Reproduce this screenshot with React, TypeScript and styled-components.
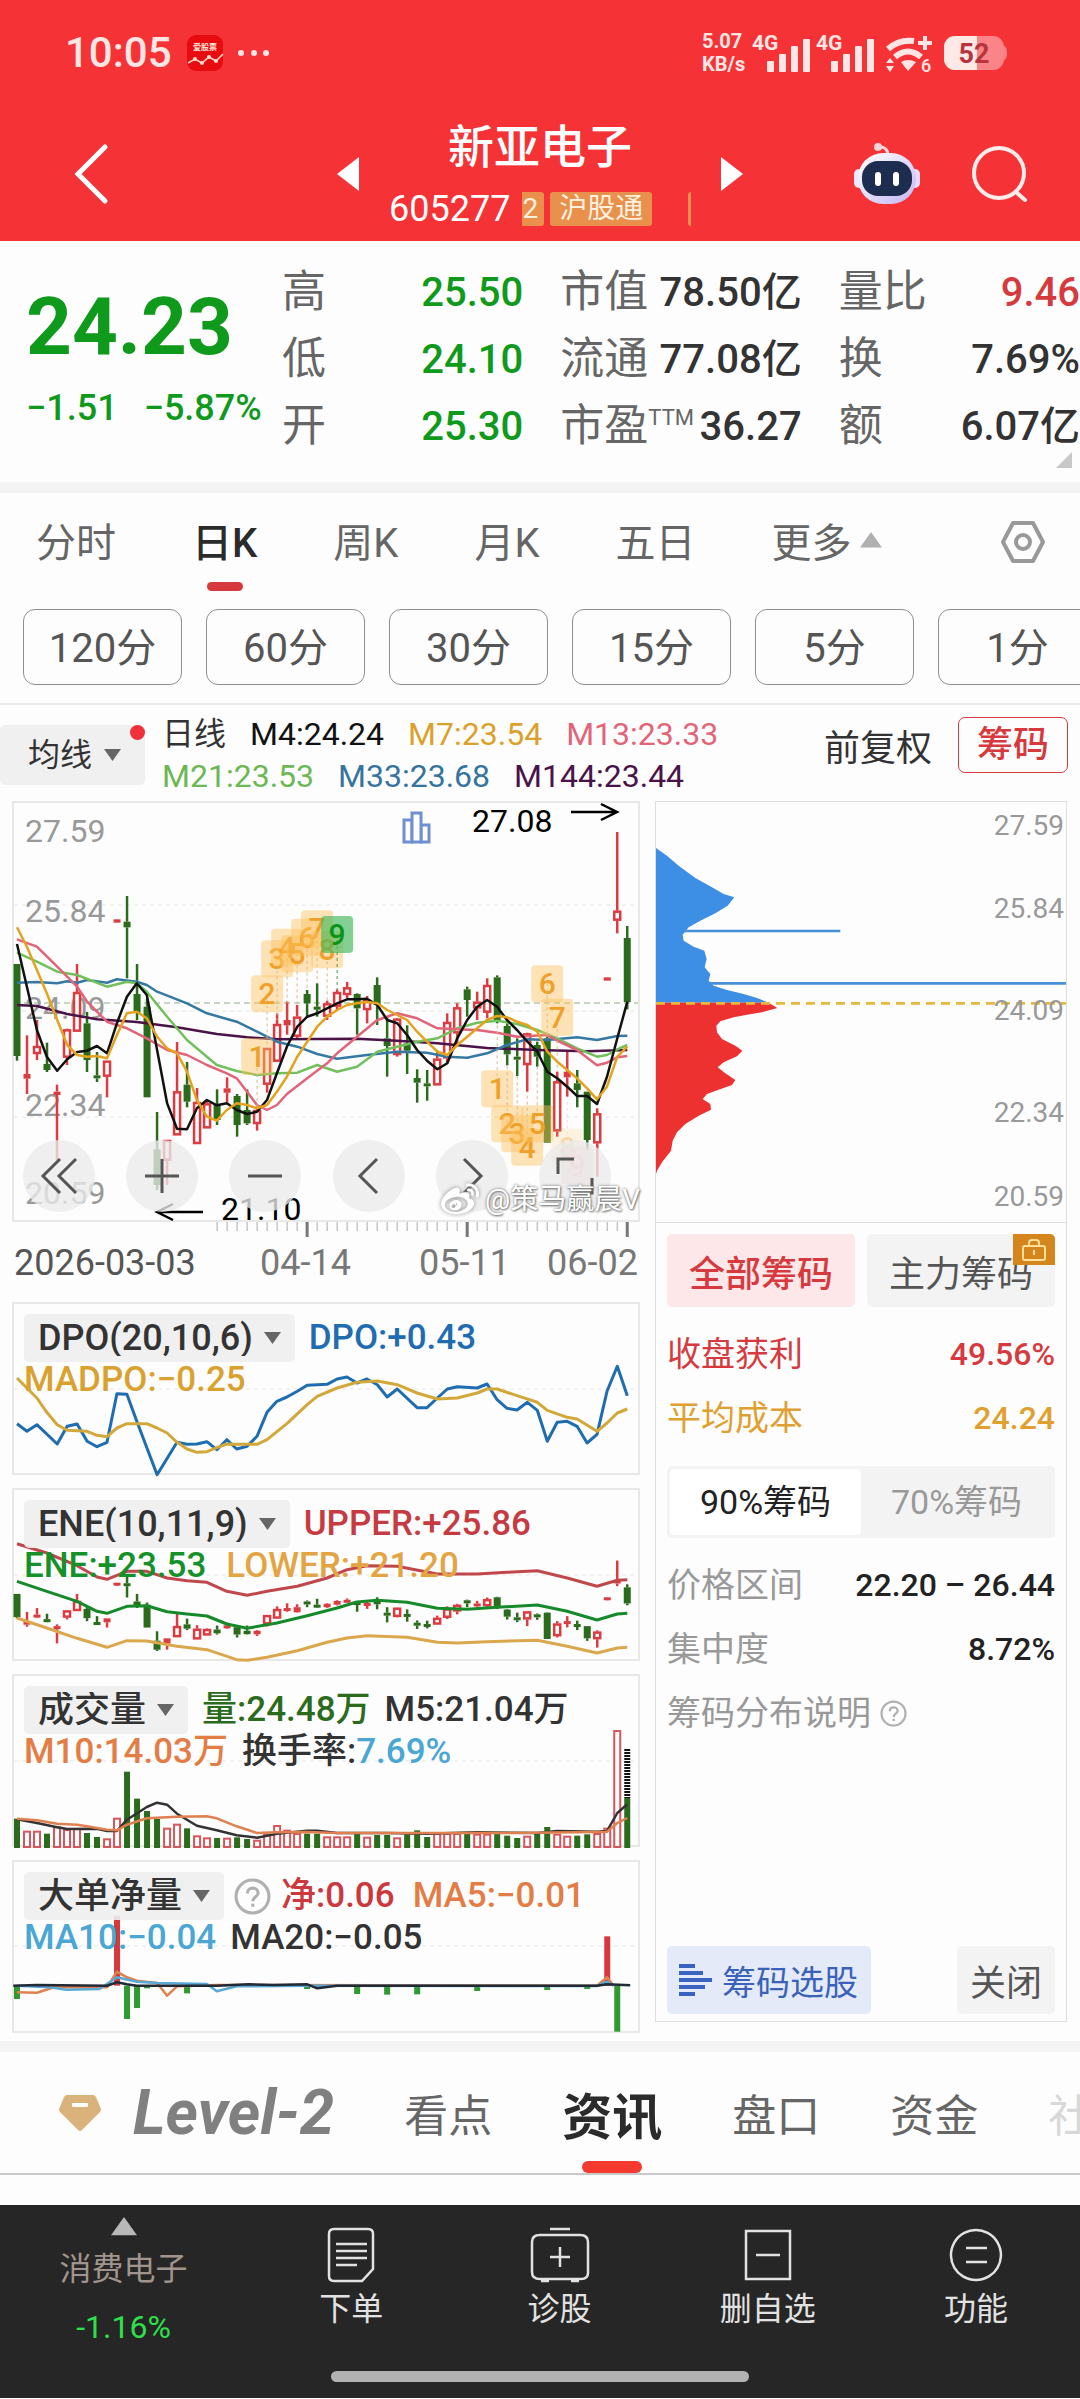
import React from "react";
import styled, { createGlobalStyle, css } from "styled-components";
import { FaWeibo } from "react-icons/fa";

const GlobalStyle = createGlobalStyle`
  *, *::before, *::after { box-sizing: border-box; }
  body {
    margin: 0;
    background: #fdfdfd;
    color: #333;
    font-family: Roboto, "Noto Sans CJK SC", sans-serif;
    overflow-x: hidden;
  }
  button, select {
    margin: 0;
    padding: 0;
    border: 0;
    background: transparent;
    color: inherit;
    font: inherit;
    cursor: pointer;
  }
  svg { display: block; overflow: visible; }
  dl, dt, dd, h1 { margin: 0; font-weight: inherit; }
`;

const RED = "#d63a3f";
const GREEN = "#0f9a1c";
const UP = "#dc3c41";
const DOWN = "#2b6b1c";

/* ---------- header ---------- */

const Header = styled.header`
  background: #f53337;
  color: #fff;
`;

const StatusBar = styled.div`
  display: flex;
  align-items: center;
  justify-content: space-between;
  height: 106px;
  padding: 0 73px 0 65px;
  color: #ffe6e4;
`;

const StatusGroup = styled.div<{ $gap: number }>`
  display: flex;
  align-items: center;
  gap: ${(p) => p.$gap}px;
`;

const Clock = styled.span`
  font-size: 42px;
  line-height: 50px;
  font-weight: 500;
`;

const NetSpeed = styled.span`
  width: 44px;
  font-size: 20px;
  line-height: 23px;
  font-weight: 700;
  white-space: nowrap;
`;

const TitleBar = styled.div`
  display: grid;
  grid-template-columns: 1fr auto 1fr;
  align-items: center;
  height: 135px;
  padding: 0 52px 0 74px;
`;

const HeaderButton = styled.button`
  display: block;
  justify-self: start;
`;

const HeaderActions = styled.div`
  display: flex;
  align-items: center;
  justify-self: end;
  gap: 52px;
`;

const StockSwitch = styled.div`
  display: flex;
  align-items: center;
  gap: 30px;
  padding-right: 22px;
`;

const StockName = styled.div`
  width: 302px;
  padding-top: 8px;
`;

const StockTitle = styled.h1`
  font-size: 46px;
  line-height: 62px;
  font-weight: 500;
  text-align: center;
`;

const CodeRow = styled.div`
  display: flex;
  align-items: center;
  gap: 12px;
  font-size: 36px;
  line-height: 62px;
`;

const Ticker = styled.div`
  display: flex;
  flex: 1;
  gap: 6px;
  overflow: hidden;
  justify-content: flex-start;
`;

const Tag = styled.span<{ $cut?: boolean }>`
  flex: none;
  padding: ${(p) => (p.$cut ? "0 6px 0 0" : "0 9px")};
  border-radius: ${(p) => (p.$cut ? "0 3px 3px 0" : "3px")};
  background: #e8904c;
  color: #fff0df;
  font-size: 28px;
  line-height: 34px;
`;

const NextTag = styled(Tag)`
  margin-left: 30px;
`;

/* ---------- quote ---------- */

const Quote = styled.section`
  position: relative;
  display: grid;
  grid-template-columns: 256px 1fr;
  padding: 18px 0 22px 26px;
`;

const PriceBlock = styled.div`
  padding-top: 18px;
  color: ${GREEN};
`;

const Price = styled.div`
  font-size: 80px;
  line-height: 100px;
  font-weight: 700;
`;

const Change = styled.div`
  display: flex;
  gap: 26px;
  font-size: 36px;
  line-height: 62px;
  font-weight: 500;
  white-space: nowrap;
`;

const QuoteGrid = styled.dl`
  display: grid;
  grid-template-columns: repeat(3, 1fr);
  column-gap: 37px;
`;

const QuoteCell = styled.div`
  display: flex;
  align-items: center;
  justify-content: space-between;
  height: 67px;
  white-space: nowrap;
`;

const QuoteLabel = styled.dt`
  color: #666;
  font-size: 44px;
  line-height: 67px;
`;

const QuoteValue = styled.dd<{ $color?: string }>`
  color: ${(p) => p.$color ?? "#333"};
  font-size: 40px;
  line-height: 67px;
  font-weight: 500;
`;

const Sup = styled.sup`
  font-size: 22px;
  line-height: 22px;
`;

const Corner = styled.i`
  position: absolute;
  right: 8px;
  bottom: 14px;
  border: 8px solid transparent;
  border-right-color: #c8c8c8;
  border-bottom-color: #c8c8c8;
`;

const Band = styled.div`
  height: 11px;
  background: #f4f4f4;
`;

/* ---------- period tabs ---------- */

const PeriodTabs = styled.nav`
  display: flex;
  align-items: stretch;
  gap: 76px;
  height: 98px;
  padding: 0 34px 0 36px;
`;

const PeriodTab = styled.button<{ $active?: boolean }>`
  position: relative;
  display: flex;
  align-items: center;
  gap: 8px;
  padding-bottom: 4px;
  color: ${(p) => (p.$active ? "#2b2b2b" : "#666")};
  font-size: 40px;
  font-weight: ${(p) => (p.$active ? 500 : 400)};
  white-space: nowrap;
  ${(p) =>
    p.$active &&
    css`
      &::after {
        content: "";
        position: absolute;
        bottom: 0;
        left: 50%;
        width: 36px;
        height: 9px;
        margin-left: -18px;
        border-radius: 5px;
        background: ${RED};
      }
    `}
`;

const SettingsButton = styled.button`
  margin-left: auto;
`;

const Intervals = styled.div`
  display: flex;
  gap: 24px;
  padding: 18px 0 18px 23px;
  border-bottom: 2px solid #e9e9e9;
  overflow: hidden;
`;

const Interval = styled.button`
  flex: 0 0 159px;
  height: 76px;
  padding-bottom: 4px;
  border: 1px solid #8e8e93;
  border-radius: 12px;
  color: #555;
  font-size: 40px;
`;

/* ---------- moving average legend ---------- */

const Legend = styled.div`
  display: flex;
  align-items: flex-start;
  height: 96px;
  padding: 8px 12px 0 0;
`;

const PickerBox = styled.label<{ $wide?: boolean }>`
  position: relative;
  display: flex;
  flex: none;
  align-items: center;
  gap: ${(p) => (p.$wide ? 12 : 11)}px;
  height: ${(p) => (p.$wide ? 60 : 48)}px;
  margin-top: ${(p) => (p.$wide ? 12 : 0)}px;
  padding: ${(p) => (p.$wide ? "0 24px 0 28px" : "0 14px")};
  border-radius: 5px;
  background: rgba(238, 238, 238, 0.9);
  color: #333;
  font-size: ${(p) => (p.$wide ? 32 : 36)}px;
`;

const Choice = styled.select`
  appearance: none;
  field-sizing: content;
  outline: 0;
`;

const Dot = styled.i`
  position: absolute;
  top: 0;
  right: 0;
  width: 15px;
  height: 15px;
  border-radius: 50%;
  background: #f0303a;
`;

const MaList = styled.div`
  display: flex;
  flex: 1;
  flex-direction: column;
  padding-left: 17px;
`;

const MaRow = styled.div`
  display: flex;
  gap: 24px;
  font-size: 32px;
  line-height: 42px;
  white-space: nowrap;
`;

const Ink = styled.span<{ $color: string }>`
  color: ${(p) => p.$color};
`;

const AdjustButton = styled.button`
  margin: 15px 26px 0 0;
  font-size: 36px;
  line-height: 42px;
`;

const ChipsButton = styled.button`
  width: 110px;
  height: 56px;
  margin-top: 4px;
  border: 1px solid ${RED};
  border-radius: 7px;
  color: ${RED};
  font-size: 36px;
  line-height: 50px;
  font-weight: 500;
`;

/* ---------- charts ---------- */

const Board = styled.main`
  display: grid;
  grid-template-columns: 628fr 412fr;
  gap: 15px;
  padding: 0 13px 8px 12px;
`;

const Panels = styled.div`
  display: flex;
  flex-direction: column;
  gap: 13px;
`;

const Stack = styled.section`
  display: grid;
  > * {
    grid-area: 1 / 1;
  }
`;

const Plot = styled.svg`
  width: 100%;
  height: auto;
  font-family: Roboto, sans-serif;
`;

const ChartControls = styled.div`
  display: flex;
  align-self: end;
  justify-content: space-between;
  padding: 0 29px 26px 11px;
`;

const RoundButton = styled.button`
  display: grid;
  place-items: center;
  width: 72px;
  height: 72px;
  border-radius: 50%;
  background: rgba(234, 234, 234, 0.78);
`;

const Watermark = styled.div`
  display: flex;
  align-items: center;
  align-self: end;
  justify-self: end;
  gap: 6px;
  padding-bottom: 15px;
  color: #fff;
  font-size: 28px;
  line-height: 46px;
  text-shadow: 0 0 3px #666, 1px 1px 2px #888;
  pointer-events: none;
  svg {
    filter: drop-shadow(0 0 2px #888);
  }
`;

const ChartColumn = styled.div`
  display: flex;
  flex-direction: column;
`;

const Dates = styled.div`
  display: grid;
  grid-template-columns: 246px 159px 1fr auto;
  padding: 4px 2px 5px;
  color: #777;
  font-size: 36px;
  line-height: 42px;
`;

const FirstDate = styled.span`
  color: #555;
`;

const PanelText = styled.div`
  padding: 12px 12px 0;
  font-size: 35px;
  line-height: 36px;
  font-weight: 500;
  white-space: nowrap;
`;

const PanelLine = styled.div<{ $gap?: number }>`
  display: flex;
  align-items: center;
  gap: ${(p) => p.$gap ?? 14}px;
`;

/* ---------- chip distribution ---------- */

const ChipPanel = styled.aside`
  display: flex;
  flex-direction: column;
  margin-bottom: 11px;
  border: 1px solid #dedede;
`;

const ChipBody = styled.div`
  display: flex;
  flex: 1;
  flex-direction: column;
  padding: 11px 11px 7px;
  border-top: 1px solid #dedede;
`;

const ChipTabs = styled.div`
  display: grid;
  grid-template-columns: 1fr 1fr;
  gap: 12px;
  margin-bottom: 15px;
`;

const ChipTab = styled.button<{ $active?: boolean }>`
  position: relative;
  height: 73px;
  border-radius: 5px;
  background: ${(p) => (p.$active ? "#fde7e8" : "#f3f3f4")};
  color: ${(p) => (p.$active ? RED : "#555")};
  font-size: 36px;
  font-weight: ${(p) => (p.$active ? 500 : 400)};
`;

const Lock = styled.span`
  position: absolute;
  top: 0;
  right: 0;
  display: grid;
  place-items: center;
  width: 42px;
  height: 31px;
  border-radius: 0 5px 0 0;
  background: #d4861c;
`;

const ChipRow = styled.div<{ $color?: string }>`
  display: flex;
  align-items: center;
  justify-content: space-between;
  color: ${(p) => p.$color ?? "#999"};
  font-size: 34px;
  line-height: 64px;
  white-space: nowrap;
`;

const ChipValue = styled.span<{ $color: string }>`
  color: ${(p) => p.$color};
  font-size: 32px;
  font-weight: 500;
`;

const Segments = styled.div`
  display: grid;
  grid-template-columns: 1fr 1fr;
  height: 72px;
  margin: 16px 0 15px;
  padding: 3px;
  border-radius: 5px;
  background: #f3f3f3;
`;

const Segment = styled.button<{ $active?: boolean }>`
  padding-bottom: 6px;
  border-radius: 4px;
  background: ${(p) => (p.$active ? "#fff" : "transparent")};
  color: ${(p) => (p.$active ? "#222" : "#999")};
  font-size: 34px;
`;

const HelpLink = styled.button`
  display: flex;
  align-items: center;
  gap: 9px;
  color: #999;
  font-size: 34px;
  line-height: 64px;
`;

const ChipFooter = styled.div`
  display: flex;
  justify-content: space-between;
  margin-top: auto;
`;

const PickStocks = styled.button`
  display: flex;
  align-items: center;
  gap: 10px;
  height: 68px;
  padding: 0 13px 0 12px;
  border-radius: 5px;
  background: #e5eaf8;
  color: #3a62b8;
  font-size: 34px;
`;

const CloseButton = styled.button`
  width: 98px;
  height: 68px;
  border-radius: 5px;
  background: #f3f3f3;
  color: #555;
  font-size: 36px;
`;

/* ---------- bottom ---------- */

const InfoTabs = styled.nav`
  display: flex;
  gap: 70px;
  height: 123px;
  padding-left: 59px;
  border-bottom: 2px solid #c9c9c9;
  overflow: hidden;
`;

const InfoTab = styled.button<{ $active?: boolean; $faded?: boolean }>`
  position: relative;
  display: flex;
  flex: none;
  align-items: center;
  gap: 32px;
  color: ${(p) => (p.$active ? "#2b2b2b" : p.$faded ? "#d8d8d8" : "#666")};
  font-size: ${(p) => (p.$active ? 50 : 44)}px;
  font-weight: ${(p) => (p.$active ? 700 : 400)};
  ${(p) =>
    p.$active &&
    css`
      &::after {
        content: "";
        position: absolute;
        bottom: 0;
        left: 50%;
        width: 60px;
        height: 12px;
        margin-left: -30px;
        border-radius: 6px;
        background: #f43a30;
      }
    `}
`;

const LevelText = styled.span`
  color: #808080;
  font-size: 62px;
  line-height: 66px;
  font-style: italic;
  font-weight: 700;
`;

const ContentPeek = styled.div`
  height: 30px;
`;

const Dock = styled.footer`
  padding-bottom: 16px;
  background: #262626;
  color: #e2e2e2;
`;

const DockItems = styled.nav`
  display: grid;
  grid-template-columns: 247fr 208fr 208fr 208fr 208fr;
  height: 166px;
`;

const DockItem = styled.button`
  display: flex;
  flex-direction: column;
  align-items: center;
  gap: 4px;
  padding-top: 22px;
  font-size: 32px;
  line-height: 44px;
`;

const Sector = styled(DockItem)`
  gap: 0;
  padding-top: 12px;
  color: #a0958e;
  line-height: 58px;
`;

const SectorName = styled.span`
  margin-top: 5px;
`;

const HomeBar = styled.div`
  width: 418px;
  height: 11px;
  margin: 0 auto;
  border-radius: 6px;
  background: #b2b2b2;
`;

/* ---------- chart data ---------- */

/* Plot units: 24.13 per session across, 3 per pixel down. */
const STEP = 24.13;
const px = (x: number) => x / 2.412 - 12;
const sx = (i: number) => px(41 + STEP * i);

const trace = (points: string, top: number) =>
  points
    .split(" ")
    .map((p) => {
      const [x, y] = p.split(",").map(Number);
      return `${px(x).toFixed(1)},${((y - top) / 3).toFixed(1)}`;
    })
    .join(" ");

/* rising, high, body top, body bottom, low, volume top */
type Candle = [0 | 1, number, number, number, number, number];

const candles: Candle[] = [
  [0, 522, 522, 798, 812, 447], [1, 736, 852, 866, 912, 483], [1, 690, 768, 792, 810, 483],
  [0, 758, 822, 840, 846, 492], [1, 884, 905, 915, 1110, 470], [1, 716, 718, 803, 825, 478],
  [1, 522, 606, 725, 725, 475], [0, 666, 700, 810, 846, 490], [0, 786, 856, 864, 876, 502],
  [1, 812, 812, 860, 922, 506], [1, 388, 388, 398, 398, 444], [0, 318, 395, 412, 565, 306],
  [0, 522, 612, 668, 690, 387], [0, 625, 650, 922, 922, 424], [0, 966, 1078, 1185, 1200, 448],
  [1, 1050, 1050, 1112, 1185, 474], [1, 756, 904, 1036, 1036, 462], [0, 816, 884, 935, 952, 476],
  [1, 894, 936, 1062, 1062, 497], [1, 932, 940, 1015, 1015, 503], [0, 898, 945, 990, 1005, 505],
  [1, 862, 895, 908, 938, 504], [0, 912, 918, 1005, 1040, 503], [0, 898, 960, 1000, 1005, 508],
  [1, 950, 960, 1002, 1022, 510], [1, 774, 774, 884, 908, 492], [1, 670, 702, 815, 815, 466],
  [1, 634, 690, 706, 734, 480], [1, 645, 680, 740, 745, 490], [0, 600, 612, 640, 680, 492],
  [0, 580, 650, 656, 680, 492], [1, 632, 640, 680, 690, 500], [1, 598, 606, 650, 660, 500],
  [1, 576, 592, 615, 625, 500], [0, 610, 612, 655, 734, 492], [1, 618, 630, 660, 700, 501],
  [0, 562, 585, 645, 705, 496], [0, 680, 745, 768, 860, 496], [1, 684, 686, 795, 800, 503],
  [0, 706, 760, 782, 852, 494], [0, 838, 864, 878, 938, 482], [0, 840, 880, 888, 932, 502],
  [1, 780, 806, 886, 886, 490], [1, 670, 696, 805, 820, 490], [1, 640, 652, 730, 765, 490],
  [0, 590, 598, 630, 680, 492], [1, 605, 635, 655, 690, 492], [1, 565, 585, 668, 685, 492],
  [0, 556, 562, 690, 700, 492], [0, 700, 708, 793, 826, 498], [0, 745, 800, 808, 858, 505],
  [1, 728, 730, 825, 905, 498], [0, 755, 765, 800, 830, 490], [0, 740, 745, 1058, 1058, 472],
  [1, 845, 874, 1024, 1040, 492], [1, 786, 845, 862, 920, 498], [0, 840, 880, 900, 952, 498],
  [0, 905, 905, 1050, 1080, 494], [1, 955, 970, 1060, 1160, 490], [1, 562, 562, 572, 572, 474],
  [1, 126, 362, 392, 430, 181], [0, 408, 444, 636, 658, 385],
];

const averages: [string, string][] = [
  ["#4b1248", "41,645 89,648 162,672 234,688 330,696 427,712 523,732 596,742 668,748 861,746 958,752 1055,760 1175,774 1296,780 1416,784 1513,780"],
  ["#3579a3", "41,578 89,576 138,580 162,574 186,578 210,570 258,578 282,568 330,575 354,585 379,605 451,640 499,670 571,695 620,725 668,755 717,770 765,792 813,806 885,795 958,785 1030,788 1079,800 1127,803 1175,790 1223,765 1272,748 1320,750 1392,742 1440,750 1489,738 1513,737"],
  ["#72c05c", "41,488 89,515 138,545 186,555 258,590 306,575 330,580 354,605 403,680 451,750 499,800 523,825 571,843 620,855 668,850 717,848 765,825 813,845 861,830 910,785 958,770 1006,755 1055,745 1103,715 1151,698 1199,692 1247,702 1296,720 1344,745 1392,775 1440,800 1464,795 1489,778 1513,765"],
  ["#e26478", "41,448 89,470 138,530 186,590 210,635 234,665 258,695 306,715 354,745 403,780 451,795 499,825 547,850 571,865 596,905 620,945 644,960 668,945 692,912 741,865 789,820 813,790 861,740 910,690 958,670 1006,685 1055,715 1103,718 1151,720 1199,728 1247,740 1320,735 1344,752 1392,780 1440,826 1464,818 1489,802 1513,798"],
  ["#111", "41,462 65,590 89,720 113,800 138,842 162,808 186,786 210,782 234,768 258,790 282,700 306,620 330,580 354,615 379,780 403,940 427,1016 451,1018 475,955 499,930 523,946 547,940 571,960 596,972 620,965 644,930 668,850 692,770 717,710 741,680 765,670 789,655 813,640 837,628 861,628 885,626 910,645 934,690 958,700 982,735 1006,780 1030,812 1055,838 1079,820 1103,745 1127,690 1151,650 1175,630 1199,650 1223,690 1247,720 1272,755 1296,785 1320,845 1344,865 1368,890 1392,918 1416,918 1440,942 1464,860 1489,745 1513,635"],
  ["#e3a31e", "41,412 65,470 89,540 113,610 138,690 162,765 186,795 210,800 234,798 258,805 282,735 306,670 330,665 354,685 379,740 403,775 427,790 451,845 475,930 499,980 523,992 547,960 571,940 596,945 620,955 644,945 668,905 692,860 717,800 741,755 765,710 789,680 813,660 837,645 861,640 885,636 910,640 934,660 958,675 982,690 1006,725 1030,755 1055,785 1079,795 1103,765 1127,740 1151,715 1175,690 1199,678 1223,682 1247,695 1272,705 1296,725 1320,785 1344,815 1368,840 1392,865 1416,895 1440,928 1464,890 1489,800 1513,770"],
];

const dpo: [string, string][] = [
  ["#1f6db0", "41,402 65,425 89,405 138,463 162,410 186,403 210,455 234,471 258,458 282,312 306,314 330,395 379,555 427,458 451,464 475,463 499,456 523,480 547,450 571,478 596,470 620,440 644,368 668,335 692,322 717,305 741,287 789,284 813,268 837,262 861,280 885,268 910,285 934,322 958,298 1006,354 1030,354 1055,325 1079,298 1103,291 1151,295 1175,283 1199,330 1223,356 1247,361 1272,338 1296,362 1320,455 1344,398 1368,395 1392,410 1416,460 1440,434 1464,305 1489,230 1513,318"],
  ["#d3a83a", "41,265 89,325 113,368 138,405 162,422 210,425 234,437 258,441 282,415 306,402 354,402 379,415 403,430 427,458 451,478 475,488 499,486 523,474 547,463 571,464 620,464 644,450 692,402 741,345 765,320 813,295 861,278 910,274 958,285 1006,310 1055,328 1103,325 1151,310 1175,298 1199,298 1247,318 1296,338 1320,362 1368,383 1392,388 1440,425 1464,400 1489,370 1513,358"],
];

const ene: [string, string][] = [
  ["#c0484c", "41,762 113,790 186,828 234,862 258,869 306,845 354,845 403,865 451,873 499,878 547,905 596,917 644,905 717,890 789,865 837,840 885,828 958,830 1055,853 1151,853 1223,848 1296,843 1368,865 1440,890 1489,872 1513,870"],
  ["#158a2a", "41,875 113,905 186,935 234,965 258,971 306,950 354,948 403,966 451,973 499,979 547,1003 596,1016 668,1000 741,978 813,955 861,937 910,932 982,938 1055,956 1127,959 1199,953 1296,946 1368,965 1440,991 1489,973 1513,971"],
  ["#dba74c", "41,985 113,1015 186,1046 258,1073 306,1053 354,1054 427,1070 499,1080 571,1110 596,1112 644,1103 717,1083 789,1058 837,1045 885,1038 982,1043 1055,1058 1103,1060 1175,1056 1296,1052 1368,1070 1440,1090 1489,1075 1513,1073"],
];

const volumeLines: [string, string][] = [
  ["#333", "41,449 89,460 138,473 162,478 234,477 258,484 282,484 306,450 354,412 379,399 403,405 427,432 475,468 523,482 571,497 620,504 668,492 741,483 765,483 813,490 934,490 1030,492 1151,488 1296,490 1344,484 1440,486 1464,484 1489,430 1513,404"],
  ["#e08050", "41,447 89,452 138,462 186,465 210,470 258,480 282,482 306,465 354,446 427,441 499,440 523,446 571,470 620,490 668,488 741,487 813,490 1055,490 1200,490 1392,488 1464,486 1489,460 1513,445"],
];

const flowLines: [string, string][] = [
  ["#e08050", "41,970 89,971 130,955 258,955 282,908 306,925 330,935 379,942 403,980 427,952 523,948 1440,950 1464,925 1480,950"],
  ["#5aa8d6", "41,950 120,955 160,962 240,960 282,925 330,938 379,942 499,945 523,967 571,952 741,950 1440,951 1464,938 1480,950"],
  ["#222a35", "32,950 89,948 258,950 282,940 306,946 330,950 523,950 600,946 660,948 741,946 765,958 813,950 1440,950 1464,946 1520,949"],
];

const flowBars: [number, number][] = [
  [0, 990], [10, 740], [11, 1050], [12, 1017], [13, 958], [17, 973], [29, 960], [34, 975],
  [37, 977], [40, 976], [46, 966], [53, 963], [57, 960], [59, 802], [60, 1088],
];

/* session, label, marker centre, end of its guide line */
const setups: [number, string, number, number][] = [
  [24, "1", 798, 950], [25, "2", 610, 774], [26, "3", 505, 690], [27, "4", 470, 640],
  [28, "5", 490, 650], [29, "6", 440, 600], [30, "7", 415, 580], [31, "8", 478, 632],
  [48, "1", 895, 700], [49, "2", 1000, 826], [50, "3", 1030, 858], [51, "4", 1070, 905],
  [52, "5", 1000, 830], [53, "6", 580, 740], [54, "7", 680, 845], [55, "8", 1070, 920],
];

/* ---------- chart pieces ---------- */

function Frame({ h, grid }: { h: number; grid: number[] }) {
  return (
    <>
      <rect x="1" y="1" width="626" height={h - 2} fill="none" stroke="#e8e8e8" strokeWidth="2" />
      {grid.map((y) => (
        <line key={y} x1="2" x2="626" y1={y} y2={y} stroke="#e6e6e8" strokeWidth="1" strokeDasharray="4 4" />
      ))}
    </>
  );
}

function Lines({ data, top, width = 2.5 }: { data: [string, string][]; top: number; width?: number }) {
  return (
    <>
      {data.map(([color, pts]) => (
        <polyline key={color} points={trace(pts, top)} fill="none" stroke={color} strokeWidth={width} strokeLinejoin="round" />
      ))}
    </>
  );
}

function Candles({ map }: { map: (v: number) => number }) {
  return (
    <>
      {candles.map(([up, hi, a, b, lo], i) => {
        const x = sx(i);
        const color = up ? UP : DOWN;
        const y = map(a);
        const h = Math.max(map(b) - y, 3);
        const hollow = up === 1 && h > 6;
        return (
          <g key={i} stroke={color}>
            <line x1={x} x2={x} y1={map(hi)} y2={y} strokeWidth="2.5" />
            <line x1={x} x2={x} y1={y + h} y2={map(lo)} strokeWidth="2.5" />
            {hollow ? (
              <rect x={x - 3} y={y + 1} width="6" height={h - 2} fill="#fdfdfd" strokeWidth="2.5" />
            ) : (
              <rect x={x - 3.5} y={y} width="7" height={h} fill={color} stroke="none" />
            )}
          </g>
        );
      })}
    </>
  );
}

function Setup({ i, label, y, end, green }: { i: number; label: string; y: number; end: number; green?: boolean }) {
  const x = sx(i);
  const cy = (y - 33) / 3;
  const faded = label === "8" && i > 40;
  return (
    <g opacity={faded ? 0.4 : 1}>
      <line x1={x} x2={x} y1={cy} y2={(end - 33) / 3} stroke={green ? "#4a9a4a" : "#d9b98a"} strokeDasharray="3 3" />
      <rect x={x - 16} y={cy - 18} width="32" height="37" rx="4" fill={green ? "#43b85a" : "#fcc060"} fillOpacity={green ? 0.65 : 0.45} />
      <text x={x} y={cy + 11} textAnchor="middle" fontSize="30" fontWeight="500" fill={green ? "#0a9416" : "#f0a028"}>
        {label}
      </text>
    </g>
  );
}

function KLine() {
  const y = (v: number) => (v - 33) / 3;
  return (
    <Plot viewBox="0 0 628 437">
      <Frame h={421} grid={[104, 210, 316]} />
      <g fontSize="32" fill="#999">
        <text x="13" y="41">27.59</text>
        <text x="13" y="121">25.84</text>
        <text x="13" y="218">24.09</text>
        <text x="13" y="315">22.34</text>
        <text x="13" y="403">20.59</text>
      </g>
      <line x1="2" x2="626" y1="202" y2="202" stroke="#8fae86" strokeDasharray="6 4" />
      <Candles map={y} />
      <Lines data={averages} top={33} />
      {setups.map(([i, label, at, end]) => (
        <Setup key={`${i}-${label}`} i={i} label={label} y={at} end={end} />
      ))}
      <Setup i={32} label="9" y={432} end={598} green />
      <g opacity="0.6">
        <rect x={sx(56) - 16} y="346" width="32" height="37" rx="4" fill="#f8c0c4" />
        <text x={sx(56)} y="375" textAnchor="middle" fontSize="30" fill="#ee8f98">9</text>
      </g>
      <g stroke="#6f8fd0" strokeWidth="3" fill="#fdfdfd">
        <rect x="392" y="19" width="8" height="22" />
        <rect x="409" y="24" width="8" height="17" />
        <rect x="400" y="12" width="9" height="29" />
      </g>
      <g fill="none" stroke="#000" strokeWidth="2.5">
        <path d="M559 11H604M589 3l16 8l-16 8" />
        <path d="M191 411H146M161 403l-16 8l16 8" />
      </g>
      <g fontSize="32" fill="#000">
        <text x="460" y="31">27.08</text>
        <text x="209" y="419">21.10</text>
      </g>
      {Array.from({ length: 42 }, (_, k) => 20 + k).map((i) => {
        const major = i === 29 || i === 45 || i === 61;
        return (
          <line key={i} x1={sx(i)} x2={sx(i)} y1="421" y2={major ? 436 : 430} stroke={major ? "#777" : "#aaa"} strokeWidth={major ? 3 : 1} />
        );
      })}
    </Plot>
  );
}

function ChipProfile() {
  const blue =
    "47,172 80,195 115,225 165,262 215,290 250,310 282,320 262,345 225,368 180,390 145,410 127,432 130,450 160,468 192,480 199,505 193,530 210,550 205,570 220,585 260,598 310,610 350,622 385,636 47,636";
  const red =
    "47,636 385,636 411,652 365,665 320,672 280,680 240,692 228,705 230,725 245,745 285,765 306,780 290,797 250,815 232,830 255,848 285,868 275,883 235,897 200,910 187,925 210,940 212,957 175,975 135,1000 110,1025 97,1050 92,1080 65,1115 50,1140 47,1150";
  return (
    <Plot viewBox="0 0 410 420">
      <g transform="scale(0.3333) translate(-47 -34)">
        <polygon points={blue} fill="#3d8fe6" />
        <polygon points={red} fill="#ed3130" />
        <path d="M130 421H600M205 578H1277" stroke="#4590d8" strokeWidth="8" />
        <path d="M47 638H1277" stroke="#e6b93c" strokeWidth="8" strokeDasharray="27 18" />
      </g>
      <g fontSize="28" fill="#999" textAnchor="end">
        <text x="408" y="33">27.59</text>
        <text x="408" y="116">25.84</text>
        <text x="408" y="218">24.09</text>
        <text x="408" y="320">22.34</text>
        <text x="408" y="404">20.59</text>
      </g>
    </Plot>
  );
}

/* ---------- small icons ---------- */

const Caret = ({ up, w = 17, color = "#666" }: { up?: boolean; w?: number; color?: string }) => (
  <svg width={w} height={w * 0.7} viewBox="0 0 20 14" fill={color}>
    <path d={up ? "M10 0L20 14H0Z" : "M0 0H20L10 14Z"} />
  </svg>
);

const Help = ({ size }: { size: number }) => (
  <svg width={size} height={size} viewBox="0 0 36 36" fill="none" stroke="#b0b0b0" strokeWidth="3">
    <circle cx="18" cy="18" r="16" />
    <path d="M13 15c0-7 10.500-6.500 10.500-0.500c0 3.500-5.200 4-5.200 8" />
    <path d="M18.300 25v3" />
  </svg>
);

const Signal = () => (
  <svg width="58" height="42" viewBox="0 0 58 42" fill="#ffe6e4">
    <text x="0" y="18" fontSize="21" fontWeight="700" fontFamily="Roboto, sans-serif">4G</text>
    <rect x="15" y="29" width="7" height="11" rx="1" />
    <rect x="27" y="22" width="7" height="18" rx="1" />
    <rect x="39" y="14" width="7" height="26" rx="1" />
    <rect x="51" y="7" width="7" height="33" rx="1" />
  </svg>
);

const Wifi = () => (
  <svg width="48" height="42" viewBox="0 0 48 42">
    <g fill="none" stroke="#ffe6e4" strokeWidth="6">
      <path d="M3 17Q14 7 29 9" />
      <path d="M10 25Q23 14 36 25" />
    </g>
    <path d="M16 30Q23 26 31 30L23 39ZM1 31L5 26L9 31ZM1 34H9L5 40ZM33 9h5v-5h4v5h5v4h-5v5h-4v-5h-5Z" fill="#ffe6e4" />
    <text x="36" y="40" fontSize="18" fontWeight="500" fontFamily="Roboto, sans-serif" fill="#ffe6e4">6</text>
  </svg>
);

const Battery = () => (
  <svg width="63" height="34" viewBox="0 0 63 34">
    <rect width="60" height="34" rx="11" fill="#fb8489" />
    <path d="M60 10q3 1 3 7t-3 7Z" fill="#fb8489" />
    <path d="M11 0H33V34H11A11 11 0 0 1 0 23V11A11 11 0 0 1 11 0Z" fill="#ffe9e7" />
    <text x="30" y="27" textAnchor="middle" fontSize="27" fontWeight="700" fontFamily="Roboto, sans-serif" fill="#b8343c">52</text>
  </svg>
);

const AppBadge = () => (
  <svg width="36" height="36" viewBox="0 0 36 36">
    <rect width="36" height="36" rx="9" fill="#e60c12" />
    <text x="18" y="15" textAnchor="middle" fontSize="8" fontWeight="700" fontFamily="Noto Sans CJK SC, sans-serif" fill="#ffe6d8">爱股票</text>
    <path d="M1 28L8 24L15 28L22 22L29 26L36 19" fill="none" stroke="#ffdcc8" strokeWidth="1.5" />
    <g fill="#ffdcc8"><circle cx="8" cy="24" r="2" /><circle cx="15" cy="28" r="2" /><circle cx="22" cy="22" r="2" /><circle cx="29" cy="26" r="2" /></g>
  </svg>
);

const Robot = () => (
  <svg width="66" height="64" viewBox="0 0 66 64">
    <defs>
      <linearGradient id="shell" x1="0" y1="0" x2="1" y2="1">
        <stop offset="0" stopColor="#fff" />
        <stop offset="0.5" stopColor="#e3ddfb" />
        <stop offset="1" stopColor="#c5b4f2" />
      </linearGradient>
    </defs>
    <path d="M24 5Q34 4 34 14" fill="none" stroke="#ffd9dc" strokeWidth="3" />
    <circle cx="24" cy="5" r="4" fill="#ffd3d6" />
    <rect x="0" y="27" width="10" height="19" rx="5" fill="#f1e6fb" />
    <rect x="56" y="27" width="10" height="19" rx="5" fill="#e7dcfb" />
    <rect x="4" y="11" width="58" height="51" rx="25" fill="url(#shell)" />
    <rect x="8" y="19" width="50" height="35" rx="16" fill="#1d2d50" />
    <rect x="21" y="30" width="6" height="14" rx="3" fill="#fff" />
    <rect x="39" y="30" width="6" height="14" rx="3" fill="#fff" />
  </svg>
);

const Arrow = ({ flip }: { flip?: boolean }) => (
  <svg width="22" height="34" viewBox="0 0 22 34" fill="#fff">
    <path d={flip ? "M0 0L22 17L0 34Z" : "M22 0L0 17L22 34Z"} />
  </svg>
);

const controlIcons: [string, string][] = [
  ["最早", "M20 2L3 19L20 36M36 2L19 19L36 36"],
  ["放大", "M2 19H36M19 2V36"],
  ["缩小", "M2 19H36"],
  ["左移", "M27 2L10 19L27 36"],
  ["右移", "M11 2L28 19L11 36"],
  ["全屏", "M2 17V2H18M36 21V36H20"],
];

const dockIcons: [string, React.ReactNode][] = [
  ["下单", <path key="a" d="M8 2H42Q47 2 47 7V42L36 54H8Q3 54 3 49V7Q3 2 8 2ZM10 17H41M10 24H41M10 31H41M10 38H31" />],
  ["诊股", <path key="b" d="M5 8H45Q53 8 53 15V46Q53 52 46 52H5Q-3 52 -3 45V15Q-3 8 5 8ZM15 2H35M25 20V40M15 30H35M6 54H14M36 54H44" />],
  ["删自选", <path key="c" d="M3 4H47V52H3ZM13 28H37" />],
  ["功能", <path key="d" d="M25 3A25 25 0 1 1 24.900 3ZM15 21H36M15 35H36" />],
];

/* ---------- page ---------- */

const quotes: [React.ReactNode, string, string?][] = [
  ["高", "25.50", GREEN], ["市值", "78.50亿"], ["量比", "9.46", RED],
  ["低", "24.10", GREEN], ["流通", "77.08亿"], ["换", "7.69%"],
  ["开", "25.30", GREEN], [<>市盈<Sup>TTM</Sup></>, "36.27"], ["额", "6.07亿"],
];

function Picker({ label, options, wide, dot }: { label: string; options: string[]; wide?: boolean; dot?: boolean }) {
  return (
    <PickerBox $wide={wide}>
      <Choice aria-label={label} defaultValue={options[0]}>
        {options.map((o) => (
          <option key={o}>{o}</option>
        ))}
      </Choice>
      <Caret />
      {dot && <Dot />}
    </PickerBox>
  );
}

export default function App() {
  return (
    <>
      <GlobalStyle />
      <Header>
        <StatusBar>
          <StatusGroup $gap={15}>
            <Clock>10:05</Clock>
            <AppBadge />
            <svg width="32" height="6" viewBox="0 0 32 6" fill="#ffe6e4">
              <circle cx="3" cy="3" r="3" /><circle cx="16" cy="3" r="3" /><circle cx="28" cy="3" r="3" />
            </svg>
          </StatusGroup>
          <StatusGroup $gap={11}>
            <StatusGroup $gap={6}>
              <NetSpeed>5.07<br />KB/s</NetSpeed>
              <Signal />
              <Signal />
            </StatusGroup>
            <Wifi />
            <Battery />
          </StatusGroup>
        </StatusBar>
        <TitleBar>
          <HeaderButton aria-label="返回">
            <svg width="34" height="60" viewBox="0 0 34 60" fill="none" stroke="#fff" strokeWidth="5" strokeLinecap="round">
              <path d="M31 3L4 30L31 57" />
            </svg>
          </HeaderButton>
          <StockSwitch>
            <HeaderButton aria-label="上一只"><Arrow /></HeaderButton>
            <StockName>
              <StockTitle>新亚电子</StockTitle>
              <CodeRow>
                605277
                <Ticker>
                  <Tag $cut>2</Tag>
                  <Tag>沪股通</Tag>
                  <NextTag>融</NextTag>
                </Ticker>
              </CodeRow>
            </StockName>
            <HeaderButton aria-label="下一只"><Arrow flip /></HeaderButton>
          </StockSwitch>
          <HeaderActions>
            <HeaderButton aria-label="智能助手"><Robot /></HeaderButton>
            <HeaderButton aria-label="搜索">
              <svg width="56" height="56" viewBox="0 0 56 56" fill="none" stroke="#ffeceb" strokeWidth="4" strokeLinecap="round">
                <circle cx="27" cy="27" r="25" />
                <path d="M44 46L53 54" />
              </svg>
            </HeaderButton>
          </HeaderActions>
        </TitleBar>
      </Header>

      <Quote>
        <PriceBlock>
          <Price>24.23</Price>
          <Change><span>−1.51</span><span>−5.87%</span></Change>
        </PriceBlock>
        <QuoteGrid>
          {quotes.map(([label, value, color]) => (
            <QuoteCell key={value}>
              <QuoteLabel>{label}</QuoteLabel>
              <QuoteValue $color={color}>{value}</QuoteValue>
            </QuoteCell>
          ))}
        </QuoteGrid>
        <Corner />
      </Quote>
      <Band />

      <PeriodTabs>
        <PeriodTab>分时</PeriodTab>
        <PeriodTab $active>日K</PeriodTab>
        <PeriodTab>周K</PeriodTab>
        <PeriodTab>月K</PeriodTab>
        <PeriodTab>五日</PeriodTab>
        <PeriodTab>更多<Caret up w={22} color="#b0b0b0" /></PeriodTab>
        <SettingsButton aria-label="设置">
          <svg width="46" height="44" viewBox="0 0 46 44" fill="none" stroke="#999" strokeWidth="4" strokeLinejoin="round">
            <path d="M13 3H33L43 22L33 41H13L3 22Z" />
            <circle cx="23" cy="22" r="7" />
          </svg>
        </SettingsButton>
      </PeriodTabs>
      <Intervals>
        {["120分", "60分", "30分", "15分", "5分", "1分"].map((t) => (
          <Interval key={t}>{t}</Interval>
        ))}
      </Intervals>

      <Legend>
        <Picker label="主图指标" options={["均线"]} wide dot />
        <MaList>
          <MaRow>
            <Ink $color="#333">日线</Ink>
            <Ink $color="#111">M4:24.24</Ink>
            <Ink $color="#dba12a">M7:23.54</Ink>
            <Ink $color="#e26478">M13:23.33</Ink>
          </MaRow>
          <MaRow>
            <Ink $color="#6cb854">M21:23.53</Ink>
            <Ink $color="#35749e">M33:23.68</Ink>
            <Ink $color="#4b1248">M144:23.44</Ink>
          </MaRow>
        </MaList>
        <AdjustButton>前复权</AdjustButton>
        <ChipsButton>筹码</ChipsButton>
      </Legend>

      <Board>
        <Panels>
          <ChartColumn>
            <Stack>
              <KLine />
              <ChartControls>
                {controlIcons.map(([name, d]) => (
                  <RoundButton key={name} aria-label={name}>
                    <svg width="38" height="38" viewBox="0 0 38 38" fill="none" stroke="#555" strokeWidth="3">
                      <path d={d} />
                    </svg>
                  </RoundButton>
                ))}
              </ChartControls>
              <Watermark>
                <FaWeibo size={38} />
                @策马赢晨V
              </Watermark>
            </Stack>
            <Dates>
              <FirstDate>2026-03-03</FirstDate>
              <span>04-14</span>
              <span>05-11</span>
              <span>06-02</span>
            </Dates>
          </ChartColumn>

          <Stack>
            <Plot viewBox="0 0 628 173">
              <Frame h={173} grid={[87]} />
              <Lines data={dpo} top={37} width={3} />
            </Plot>
            <PanelText>
              <PanelLine>
                <Picker label="副图一" options={["DPO(20,10,6)"]} />
                <Ink $color="#1f6db0">DPO:+0.43</Ink>
              </PanelLine>
              <PanelLine><Ink $color="#d9a12e">MADPO:−0.25</Ink></PanelLine>
            </PanelText>
          </Stack>

          <Stack>
            <Plot viewBox="0 0 628 173">
              <Frame h={173} grid={[87]} />
              <Candles map={(v) => (893 + (v - 444) * 0.2525 - 595) / 3} />
              <Lines data={ene} top={595} width={3} />
            </Plot>
            <PanelText>
              <PanelLine>
                <Picker label="副图二" options={["ENE(10,11,9)"]} />
                <Ink $color="#c63b42">UPPER:+25.86</Ink>
              </PanelLine>
              <PanelLine $gap={20}>
                <Ink $color="#15912a">ENE:+23.53</Ink>
                <Ink $color="#e3a544">LOWER:+21.20</Ink>
              </PanelLine>
            </PanelText>
          </Stack>

          <Stack>
            <Plot viewBox="0 0 628 173">
              <Frame h={173} grid={[87]} />
              {candles.map(([up, , , , , top], i) => {
                const y = (top - 13) / 3;
                return up ? (
                  <rect key={i} x={sx(i) - 3} y={y + 1} width="6" height={172 - y} fill="#fdfdfd" stroke="#d6565c" strokeWidth="2" />
                ) : (
                  <rect key={i} x={sx(i) - 3} y={y} width="6" height={174 - y} fill={DOWN} />
                );
              })}
              <line x1={sx(61)} x2={sx(61)} y1="75" y2="124" stroke="#111" strokeWidth="6" strokeDasharray="2 1" />
              <Lines data={volumeLines} top={13} />
            </Plot>
            <PanelText>
              <PanelLine>
                <Picker label="副图三" options={["成交量"]} />
                <Ink $color={DOWN}>量:24.48万</Ink>
                <Ink $color="#333">M5:21.04万</Ink>
              </PanelLine>
              <PanelLine>
                <Ink $color="#e37d45">M10:14.03万</Ink>
                <span>换手率:<Ink $color="#4aa6d2">7.69%</Ink></span>
              </PanelLine>
            </PanelText>
          </Stack>

          <Stack>
            <Plot viewBox="0 0 628 173">
              <Frame h={173} grid={[86]} />
              {flowBars.map(([i, v]) => (
                <rect key={i} x={sx(i) - 3} y={(Math.min(v, 950) - 573) / 3} width="6" height={Math.abs(v - 950) / 3} fill={v < 950 ? "#d6383c" : "#2f9a2f"} />
              ))}
              <Lines data={flowLines} top={573} />
            </Plot>
            <PanelText>
              <PanelLine $gap={10}>
                <Picker label="副图四" options={["大单净量"]} />
                <Help size={37} />
                <PanelLine $gap={18}>
                  <Ink $color="#cc383e">净:0.06</Ink>
                  <Ink $color="#e37d45">MA5:−0.01</Ink>
                </PanelLine>
              </PanelLine>
              <PanelLine>
                <Ink $color="#4aa6d2">MA10:−0.04</Ink>
                <Ink $color="#333">MA20:−0.05</Ink>
              </PanelLine>
            </PanelText>
          </Stack>
        </Panels>

        <ChipPanel>
          <ChipProfile />
          <ChipBody>
            <ChipTabs>
              <ChipTab $active>全部筹码</ChipTab>
              <ChipTab>
                主力筹码
                <Lock>
                  <svg width="24" height="24" viewBox="0 0 24 24" fill="none" stroke="#ffdf9a" strokeWidth="2">
                    <rect x="1" y="8" width="22" height="14" rx="2" />
                    <path d="M7 8V5Q7 2 10 2H14Q17 2 17 5V8M12 12V17" />
                  </svg>
                </Lock>
              </ChipTab>
            </ChipTabs>
            <ChipRow $color={RED}>收盘获利<ChipValue $color={RED}>49.56%</ChipValue></ChipRow>
            <ChipRow $color="#e0a030">平均成本<ChipValue $color="#e0a030">24.24</ChipValue></ChipRow>
            <Segments>
              <Segment $active>90%筹码</Segment>
              <Segment>70%筹码</Segment>
            </Segments>
            <ChipRow>价格区间<ChipValue $color="#222">22.20 – 26.44</ChipValue></ChipRow>
            <ChipRow>集中度<ChipValue $color="#222">8.72%</ChipValue></ChipRow>
            <HelpLink>筹码分布说明<Help size={27} /></HelpLink>
            <ChipFooter>
              <PickStocks>
                <svg width="33" height="32" viewBox="0 0 33 32" stroke="#3a62c0" strokeWidth="4">
                  <path d="M0 2H16M0 9H24M0 16H33M0 23H26M0 30H16" />
                </svg>
                筹码选股
              </PickStocks>
              <CloseButton>关闭</CloseButton>
            </ChipFooter>
          </ChipBody>
        </ChipPanel>
      </Board>
      <Band />

      <InfoTabs>
        <InfoTab>
          <svg width="42" height="36" viewBox="0 0 42 36">
            <path d="M8 0H34Q36 0 37 2L42 14Q42 16 41 17L23 35Q21 37 19 35L1 17Q0 16 0 14L5 2Q6 0 8 0Z" fill="#d9b27c" />
            <rect x="13" y="8" width="16" height="4" rx="1" fill="#fff" />
          </svg>
          <LevelText>Level-2</LevelText>
        </InfoTab>
        <InfoTab>看点</InfoTab>
        <InfoTab $active>资讯</InfoTab>
        <InfoTab>盘口</InfoTab>
        <InfoTab>资金</InfoTab>
        <InfoTab $faded>社区</InfoTab>
      </InfoTabs>
      <ContentPeek />

      <Dock>
        <DockItems>
          <Sector>
            <Caret up w={26} color="#b8b8b8" />
            <SectorName>消费电子</SectorName>
            <Ink $color="#2ee04a">-1.16%</Ink>
          </Sector>
          {dockIcons.map(([name, icon]) => (
            <DockItem key={name}>
              <svg width="58" height="56" viewBox="-4 0 58 56" fill="none" stroke="#e2e2e2" strokeWidth="2.5">
                {icon}
              </svg>
              {name}
            </DockItem>
          ))}
        </DockItems>
        <HomeBar />
      </Dock>
    </>
  );
}
